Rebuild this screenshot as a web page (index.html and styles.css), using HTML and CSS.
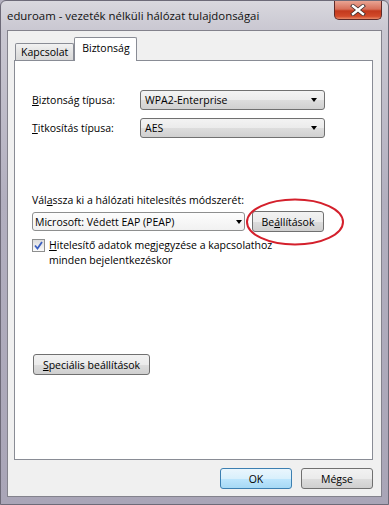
FILE: index.html
```html
<!DOCTYPE html>
<html lang="hu">
<head>
  <meta charset="UTF-8" />
  <title>eduroam - vezeték nélküli hálózat tulajdonságai</title>
  <link rel="stylesheet" href="styles.css">
</head>
<body>

<div class="window">

  <!-- TITLE BAR -->
  <div class="titlebar">
    <span class="title">eduroam - vezeték nélküli hálózat tulajdonságai</span>
    <button class="close" aria-label="Bezárás">
      <svg width="16" height="12" viewBox="0 0 16 12">
        <path d="M3 2 L13 10 M13 2 L3 10" stroke="#3a2a2a" stroke-width="4" stroke-linecap="square"/>
        <path d="M3 2 L13 10 M13 2 L3 10" stroke="#ffffff" stroke-width="2.4" stroke-linecap="square"/>
      </svg>
    </button>
  </div>

  <!-- CLIENT AREA -->
  <div class="client">

    <div class="tabs">
      <div class="tab">Kapcsolat</div>
      <div class="tab active">Biztonság</div>
    </div>

    <div class="panel">

      <div class="fields">
        <label><u>B</u>iztonság típusa:</label>
        <div class="select">WPA2-Enterprise<span class="arrow"></span></div>
        <label><u>T</u>itkosítás típusa:</label>
        <div class="select">AES<span class="arrow"></span></div>
      </div>

      <p class="method-label">Vál<u>a</u>ssza ki a hálózati hitelesítés módszerét:</p>
      <div class="method-row">
        <div class="select wide">Microsoft: Védett EAP (PEAP)<span class="arrow"></span></div>
        <div class="highlight">
          <button class="btn">Be<u>á</u>llítások</button>
          <svg class="ring" width="100" height="50" viewBox="0 0 100 50">
            <ellipse cx="50" cy="25" rx="48" ry="22.5" fill="none" stroke="#d4202c" stroke-width="2"/>
          </svg>
        </div>
      </div>

      <div class="check-row">
        <span class="checkbox">
          <svg width="9" height="9" viewBox="0 0 9 9">
            <path d="M1 4.5 L3.5 7.5 L8 1" fill="none" stroke="#3b5fc0" stroke-width="1.8"/>
          </svg>
        </span>
        <span><u>H</u>itelesítő adatok megjegyzése a kapcsolathoz<br>minden bejelentkezéskor</span>
      </div>

      <button class="btn special"><u>S</u>peciális beállítások</button>

    </div>

    <div class="footer">
      <button class="btn default">OK</button>
      <button class="btn">Mégse</button>
    </div>

  </div>

</div>

</body>
</html>
```

FILE: styles.css
```css
*{
  margin:0;
  padding:0;
  box-sizing:border-box;
}

body{
  background:#b3b0bf;
  font-family:"Open Sans", "Noto Sans", sans-serif;
  font-size:10.5px;
  color:#000;
}

.window{
  width:389px;
  height:505px;
  padding:0 6px 7px 6px;
  background:linear-gradient(#d9d8de 0px, #c9c7d1 30px, #b2afbf 200px, #a9a5b7 100%);
  border:1px solid #6d6a78;
  border-radius:6px 6px 0 0;
  display:flex;
  flex-direction:column;
}

.titlebar{
  height:29px;
  display:flex;
  align-items:flex-start;
  justify-content:space-between;
}

.title{
  font-size:11.4px;
  padding-top:7px;
  color:#111;
}

.close{
  width:48px;
  height:19px;
  border:1px solid #5e2a28;
  border-top:none;
  border-radius:0 0 5px 5px;
  background:linear-gradient(#e9a493 0%, #d7705a 45%, #c3391d 55%, #d24a2a 85%, #e98a68 100%);
  display:flex;
  align-items:center;
  justify-content:center;
}

.client{
  flex:1;
  background:#f0f0f0;
  border:1px solid #83828c;
  padding:6px 8px 0 6px;
  display:flex;
  flex-direction:column;
}

.tabs{
  display:flex;
  align-items:flex-end;
  height:23px;
  padding-left:1px;
}

.tab{
  height:17px;
  padding:0 5px;
  border:1px solid #898c95;
  border-bottom:none;
  background:linear-gradient(#f2f2f2, #e3e3e3 50%, #d9d9d9);
  display:flex;
  align-items:center;
  border-radius:2px 2px 0 0;
}

.tab.active{
  height:24px;
  margin-bottom:-1px;
  padding:3px 6px 0 7px;
  background:#fff;
  align-items:flex-start;
  position:relative;
}

.panel{
  width:359px;
  height:400px;
  background:#fff;
  border:1px solid #898c95;
  padding:29px 0 0 17px;
}

.fields{
  display:grid;
  grid-template-columns:108px 185px;
  grid-auto-rows:20px;
  row-gap:8px;
  align-items:center;
}

.select{
  height:20px;
  border:1px solid #707070;
  border-radius:3px;
  background:linear-gradient(#f3f3f3, #ebebeb 50%, #dddddd 51%, #d0d0d0);
  display:flex;
  align-items:center;
  padding-left:4px;
  position:relative;
}

.arrow{
  margin-left:auto;
  margin-right:7px;
  width:0;
  height:0;
  border-left:3.5px solid transparent;
  border-right:3.5px solid transparent;
  border-top:4px solid #000;
}

.method-label{
  margin-top:55px;
  line-height:15px;
}

.method-row{
  margin-top:3px;
  display:flex;
  align-items:center;
  gap:7px;
}

.select.wide{
  width:213px;
  height:19px;
  background:linear-gradient(#fdfdfd, #f1f1f1);
  border-color:#8e8f8f;
  padding-left:2px;
}

.select.wide .arrow{
  margin-right:2px;
}

.highlight{
  position:relative;
}

.ring{
  position:absolute;
  left:-7px;
  top:-14px;
  pointer-events:none;
}

.btn{
  height:21px;
  min-width:72px;
  padding:0 8px;
  border:1px solid #707070;
  border-radius:3px;
  background:linear-gradient(#f2f2f2, #ebebeb 50%, #dddddd 51%, #cfcfcf);
  font-family:inherit;
  font-size:10.5px;
  color:#000;
  white-space:nowrap;
}

.btn.default{
  border-color:#3c7fb1;
  background:linear-gradient(#eaf6fd, #d9f0fc 50%, #bee6fd 51%, #a7d9f5);
}

.check-row{
  margin-top:6px;
  display:flex;
  align-items:flex-start;
  gap:4px;
  line-height:15px;
}

.checkbox{
  width:13px;
  height:13px;
  margin-top:1px;
  border:1px solid #8e8f8f;
  background:linear-gradient(#dcdcdc, #fbfbfb);
  display:flex;
  align-items:center;
  justify-content:center;
}

.special{
  display:block;
  margin-top:86px;
  margin-left:1px;
  width:117px;
}

.footer{
  display:flex;
  justify-content:flex-end;
  gap:9px;
  margin-top:8px;
}
```
